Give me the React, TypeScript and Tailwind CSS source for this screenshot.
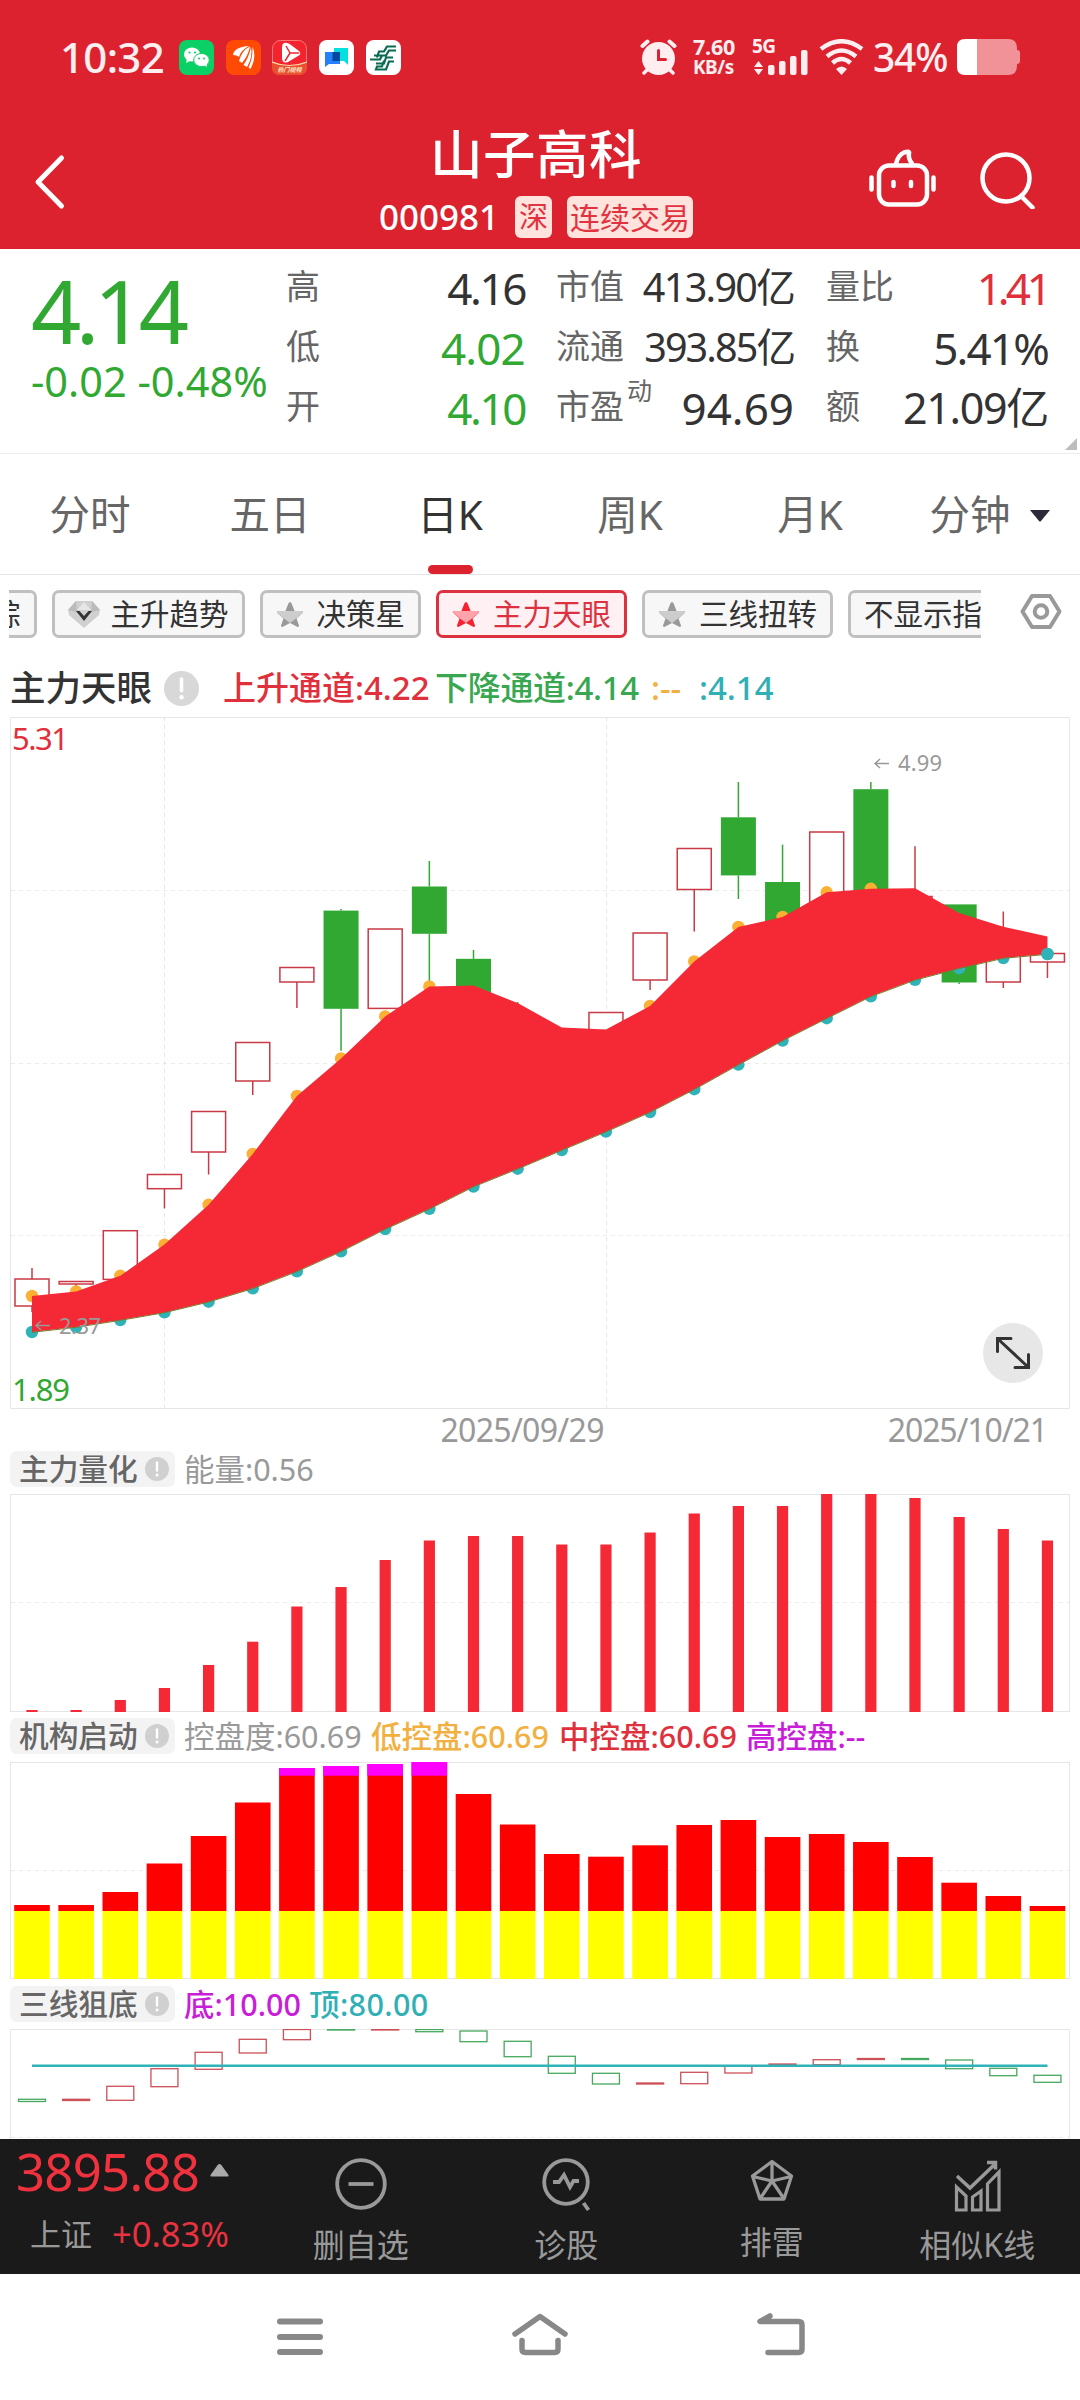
import React from 'react';

const RED = '#e0303c';
const GREEN = '#30a832';
const TEAL = '#2fb3b8';
const STEP = 44.15;

const cx = (i: number) => 32 + i * STEP;

interface Candle {
  up: boolean;
  top: number;
  bottom: number;
  high?: number;
  low?: number;
}

const candles: Candle[] = [
  { up: true, top: 1279, bottom: 1306, high: 1268, low: 1312 },
  { up: true, top: 1281.5, bottom: 1284, low: 1291 },
  { up: true, top: 1230.7, bottom: 1279.4 },
  { up: true, top: 1174.5, bottom: 1188.7, low: 1208.4 },
  { up: true, top: 1111.5, bottom: 1152, low: 1174.5 },
  { up: true, top: 1042.5, bottom: 1081, low: 1095 },
  { up: true, top: 967.5, bottom: 982, low: 1008 },
  { up: false, top: 910.6, bottom: 1008.8, high: 909, low: 1050.8 },
  { up: true, top: 929, bottom: 1008.4 },
  { up: false, top: 886.5, bottom: 933.8, high: 861, low: 984 },
  { up: false, top: 958.8, bottom: 1000, high: 950 },
  { up: false, top: 1015, bottom: 1040, high: 1002 },
  { up: true, top: 1035, bottom: 1060 },
  { up: true, top: 1012.5, bottom: 1040 },
  { up: true, top: 933, bottom: 980, low: 990 },
  { up: true, top: 848.5, bottom: 889.5, low: 931.5 },
  { up: false, top: 817.3, bottom: 875.4, high: 782, low: 899 },
  { up: false, top: 882, bottom: 930, high: 844.6 },
  { up: true, top: 832, bottom: 920 },
  { up: false, top: 789.2, bottom: 900, high: 782 },
  { up: true, top: 896.5, bottom: 950, high: 846.3 },
  { up: false, top: 904.4, bottom: 982.5, low: 984 },
  { up: true, top: 940, bottom: 982, high: 911.5, low: 988 },
  { up: true, top: 953.5, bottom: 962, low: 978 },
];

const upper = [
  1296, 1291.4, 1275.8, 1244.6, 1204.8, 1154, 1096, 1058.4, 1016.4, 986.5, 985.6, 1003,
  1027.6, 1029.4, 1006, 961.5, 927, 917, 892.3, 888.8, 888.3, 912.9, 926.7, 936.5,
];
const lower = [
  1332, 1327, 1320, 1312.4, 1301.7, 1288.3, 1271.3, 1251.3, 1229, 1208.8, 1186.5, 1168.7,
  1150, 1131.6, 1112, 1089.2, 1064.6, 1040.5, 1018.2, 996.3, 979.8, 968.2, 958, 954,
];
const upperDots = [0, 1, 2, 3, 4, 5, 6, 7, 8, 9, 14, 15, 16, 17, 18, 19];

const energy = [
  1710, 1710, 1700, 1688, 1665, 1641.7, 1606.5, 1587, 1560, 1540.5, 1536, 1536,
  1544.5, 1544.5, 1532.5, 1513.5, 1506, 1506, 1494, 1494, 1498, 1517, 1529, 1540.5,
];
const control = [
  1905, 1905, 1892, 1863.5, 1836, 1802.5, 1768, 1766, 1764, 1762, 1794, 1824.5,
  1854, 1856.7, 1845.3, 1825, 1820, 1837, 1834, 1842, 1857, 1882.7, 1896, 1906,
];

const bottomLine: [boolean, number, number][] = [
  [false, 2099.3, 2101.5], [true, 2099.3, 2100.5], [true, 2086.3, 2100.3], [true, 2068.7, 2086.7],
  [true, 2052.3, 2069.3], [true, 2039.3, 2053], [true, 2029.5, 2039.7], [false, 2029.5, 2030],
  [true, 2029.5, 2030], [false, 2029.5, 2031.7], [false, 2031, 2041.7], [false, 2041.3, 2056.7],
  [false, 2056.3, 2073.3], [false, 2073.3, 2084], [true, 2083, 2084], [true, 2072.3, 2083.7],
  [true, 2066, 2073], [true, 2064, 2065], [true, 2059.7, 2064.7], [true, 2058.5, 2059.5],
  [false, 2058.5, 2059.5], [false, 2060, 2068.7], [false, 2068.3, 2075.7], [false, 2075.3, 2082.3],
];

const StatusBar = () => (
  <div className="flex h-[114px] items-center pl-[60px] pr-[60px] text-[#ffeef0]">
    <span className="w-[119px] whitespace-nowrap text-[42px] font-medium leading-[50px] tracking-[-.7px]">10:32</span>
    <div className="flex gap-[11.7px]">
      <svg width="35" height="35" viewBox="0 0 35 35">
        <rect width="35" height="35" rx="8" fill="#0bd066" />
        <ellipse cx="13" cy="14.500" rx="8" ry="7" fill="#fff" />
        <path d="M8 19l-1 4 4-2z" fill="#fff" />
        <ellipse cx="22.500" cy="20" rx="7.800" ry="6.600" fill="#fff" stroke="#0bd066" strokeWidth="1" />
        <path d="M25 25l3 2-.5-4z" fill="#fff" />
        <circle cx="10.500" cy="12.500" r="1.100" fill="#0bd066" />
        <circle cx="16" cy="12.500" r="1.100" fill="#0bd066" />
        <circle cx="20" cy="18.500" r="1" fill="#0bd066" />
        <circle cx="25" cy="18.500" r="1" fill="#0bd066" />
      </svg>
      <svg width="35" height="35" viewBox="0 0 35 35">
        <rect width="35" height="35" rx="8" fill="#fe4a05" />
        <path d="M7 15Q8 7 23 6 15 10 13 17q-2-2-6-2z" fill="#fff" />
        <path d="M13 21Q16 10 24 6.500 22 16 16 23z" fill="#fff" />
        <path d="M17.500 25Q23 17 25 7q2 10-4 20z" fill="#fff" />
        <path d="M22.500 27.500Q27 18 26.500 6.500 31 17 24.500 29z" fill="#fff" />
      </svg>
      <svg width="35" height="35" viewBox="0 0 35 35">
        <rect x=".5" y=".5" width="34" height="34" rx="8" fill="#f4242f" stroke="#f77" />
        <path d="M0 22q17 7 35 0v5q0 8-8 8H8q-8 0-8-8z" fill="#e8502f" />
        <path d="M0 22q17 7 35 0" fill="none" stroke="#ffd9a8" strokeWidth="1.200" />
        <path d="M12 3q3-1 7 2l8 6q3 3-1 5l-10 6q-5 2-6-3V7q0-3 2-4z" fill="#fff" />
        <path d="M18 13l-4-7m4 7l9 0m-9 0l-5 8" stroke="#f4242f" strokeWidth="1.500" />
        <text x="17.500" y="32" fontSize="6" textAnchor="middle" fontStyle="italic" fontWeight="700" fill="#ffe9d0">热门视频</text>
      </svg>
      <svg width="35" height="35" viewBox="0 0 35 35">
        <rect width="35" height="35" rx="8" fill="#fff" />
        <path d="M15 8h14v17l-4-4H15z" fill="#04dfe0" />
        <path d="M6 12h15v12H10l-4 3z" fill="#2680fb" />
        <rect x="13.500" y="12" width="7.500" height="9" fill="#04479f" />
      </svg>
      <svg width="35" height="35" viewBox="0 0 35 35">
        <rect width="35" height="35" rx="8" fill="#fff" />
        <path
          d="M30 6.500H21l-3 5h-5l-2 6M30 10.500h-7l-3 5H8M4 19.500h10l2-4M27 17.500h-7l-2 6h-8M28 21.500h-5l-3 8H10l1-3h5l2-6"
          fill="none" stroke="#0b6b52" strokeWidth="2.200"
        />
      </svg>
    </div>

    <div className="ml-auto flex items-center">
      <svg width="37" height="36" viewBox="0 0 37 36" fill="none" stroke="#ffeef0" strokeLinecap="round">
        <circle cx="18.500" cy="19.500" r="16.500" fill="#ffeef0" stroke="none" />
        <path d="M2.500 7l5-4.500M34.500 7l-5-4.500" strokeWidth="4" />
        <path d="M7 31l-3 3M30 31l3 3" strokeWidth="3.500" />
        <path d="M18.500 11.500v9h7" stroke="#dc222f" strokeWidth="3" />
      </svg>
      <div className="ml-[16px] flex w-[60px] flex-col font-bold">
        <span className="text-[21.500px] leading-[20px] tracking-[-.2px]">7.60</span>
        <span className="whitespace-nowrap text-[19px] leading-[20px] tracking-[-.5px]">KB/s</span>
      </div>
      <svg className="mr-[10px] overflow-visible" width="56" height="36" viewBox="0 0 56 36" fill="#ffeef0">
        <text x="-1" y="14" fontSize="19" fontWeight="700" textLength="24">5G</text>
        <path d="M1 28l4.500-6 4.500 6zM1 30l4.500 6 4.500-6z" />
        <rect x="15" y="26" width="6.500" height="10" rx="2" />
        <rect x="26" y="22" width="6.500" height="14" rx="2" />
        <rect x="37" y="17" width="6.500" height="19" rx="2" />
        <rect x="48" y="11" width="6.500" height="25" rx="2" />
      </svg>
      <svg width="45" height="36" viewBox="0 0 45 36" fill="none" stroke="#ffeef0" strokeWidth="4.500">
        <path d="M2 10Q22.500-5.500 43 10" />
        <path d="M8 17.500q14.500-12 29 0" />
        <path d="M13.500 24q9-8 18 0" />
        <path d="M17 30q5.500-5 11 0l-5.500 6z" fill="#ffeef0" stroke="none" />
      </svg>
      <span className="ml-[9px] w-[84px] whitespace-nowrap text-[39px] font-medium leading-[50px] tracking-[-1.2px]">34%</span>
      <svg width="63" height="36" viewBox="0 0 63 36">
        <path d="M9 0h42q9 0 9 9v2q3 0 3 3v8q0 3-3 3v2q0 9-9 9H20V0z" fill="#f09298" />
        <path d="M20 0H8Q0 0 0 8v20q0 8 8 8h12z" fill="#fff" />
      </svg>
    </div>
  </div>
);

const Header = () => (
  <header className="h-[249px] bg-[#dc222f] text-white">
    <StatusBar />
    <div className="flex h-[135px] items-start justify-between pl-[33px] pr-[44px]">
      <svg className="mt-[40px]" width="34" height="56" viewBox="0 0 34 56" fill="none" stroke="#fff" strokeWidth="5" strokeLinecap="round" strokeLinejoin="round">
        <path d="M28.500 4L5 28l23.500 24" />
      </svg>
      <div className="ml-[136px] flex flex-col items-center">
        <h1 className="mt-[8px] text-[52.500px] font-medium leading-[64px] tracking-[.5px]">山子高科</h1>
        <div className="mt-[10px] flex h-[42px] items-center">
          <span className="mr-[16px] text-[35px] leading-[42px] font-medium">000981</span>
          <span className="mr-[15px] flex h-[42px] w-[37px] items-center justify-center rounded-[6px] bg-[#ffe3dc] text-[29px] text-[#e3323f]">深</span>
          <span className="flex h-[42px] w-[126px] items-center justify-center rounded-[6px] bg-[#ffe3dc] text-[30px] text-[#e3323f]">连续交易</span>
        </div>
      </div>
      <div className="mt-[34px] flex gap-[44px]">
        <svg width="67" height="61" viewBox="0 0 67 61" fill="none" stroke="#fff" strokeWidth="4.500" strokeLinecap="round">
          <rect x="10" y="17.500" width="48" height="39" rx="10" />
          <path d="M27 16q2-9 8-11.500 6-2 5 1-1 5 3 10" />
          <path d="M2.500 29.500v12M64.500 29.500v12M24.500 34v4M42 34v4" />
        </svg>
        <svg width="56" height="61" viewBox="0 0 56 61" fill="none" stroke="#fff" strokeWidth="4.500" strokeLinecap="round">
          <circle cx="26" cy="30" r="23.500" />
          <path d="M41 48l11.500 11.500" />
        </svg>
      </div>
    </div>
  </header>
);

interface QuoteCellProps {
  label: string;
  sup?: string;
  children: React.ReactNode;
}

const QuoteCell: React.FC<QuoteCellProps> = ({ label, sup, children }) => (
  <div className="flex h-[60px] items-center justify-between whitespace-nowrap">
    <span className="relative mt-[-3px] text-[34px] text-[#666]">
      {label}
      {sup && <span className="absolute left-[71px] top-[-9px] text-[25px]">{sup}</span>}
    </span>
    {children}
  </div>
);

const Quote = () => (
  <section className="relative flex h-[205px] border-b border-[#eee] pt-[9px] text-[#333]">
    <div className="w-[286px] whitespace-nowrap pl-[31px] text-[#30a832]">
      <div className="mt-[2px] text-[88px] leading-[100px] tracking-[-5.5px]">4.14</div>
      <div className="mt-[-2px] text-[41.500px] leading-[46px]">-0.02 -0.48%</div>
    </div>
    <div className="w-[239px]">
      <QuoteCell label="高"><span className="text-[44px] tracking-[-2.400px]">4.16</span></QuoteCell>
      <QuoteCell label="低"><span className="text-[44px] text-[#30a832] tracking-[-.8px]">4.02</span></QuoteCell>
      <QuoteCell label="开"><span className="text-[44px] text-[#30a832] tracking-[-2.400px]">4.10</span></QuoteCell>
    </div>
    <div className="ml-[31px] w-[238px]">
      <QuoteCell label="市值"><span className="text-[39.500px] tracking-[-1.700px]">413.90亿</span></QuoteCell>
      <QuoteCell label="流通"><span className="text-[39.500px] tracking-[-1.900px]">393.85亿</span></QuoteCell>
      <QuoteCell label="市盈" sup="动"><span className="text-[44px]">94.69</span></QuoteCell>
    </div>
    <div className="ml-[32px] w-[222px]">
      <QuoteCell label="量比"><span className="text-[44px] tracking-[-4px] text-[#e0303c]">1.41</span></QuoteCell>
      <QuoteCell label="换"><span className="text-[44px] tracking-[-1.800px]">5.41%</span></QuoteCell>
      <QuoteCell label="额"><span className="text-[43px] tracking-[-1.300px]">21.09亿</span></QuoteCell>
    </div>
    <svg className="absolute bottom-[3px] right-[3px]" width="12" height="12" viewBox="0 0 12 12">
      <path d="M12 0v12H0z" fill="#bdbdbd" />
    </svg>
  </section>
);

const tabs = ['分时', '五日', '日K', '周K', '月K', '分钟'];

const PeriodTabs = () => (
  <nav className="grid h-[121px] grid-cols-6 border-b border-[#e4e4e4] text-[40.500px] text-[#666]">
    {tabs.map((tab) => (
      <div key={tab} className="flex flex-col items-center">
        <div className={tab === '日K' ? 'flex h-[111px] items-center pt-[12px] text-[#333]' : 'flex h-[111px] items-center pt-[12px]'}>
          {tab}
          {tab === '分钟' && (
            <svg className="ml-[18px]" width="22" height="12" viewBox="0 0 22 12">
              <path d="M1 0h20l-9 11q-1 1-2 0z" fill="#2b2b38" />
            </svg>
          )}
        </div>
        {tab === '日K' && <div className="h-[9px] w-[45px] rounded-full bg-[#dc222f]" />}
      </div>
    ))}
  </nav>
);

const Star = ({ active = false }) => (
  <svg className="mr-[13px]" width="28" height="27" viewBox="0 0 28 27">
    <path
      d="M14 1q1 0 1.600 1.500l3 7.500h7.400q1.500.5.500 2l-6 5.500 2.500 7q0 2-1.800 1.300L14 22l-7.200 3.800Q5 26.500 5 24.500l2.500-7-6-5.500q-1-1.500.5-2h7.400l3-7.500Q13 1 14 1z"
      fill={active ? '#f5222f' : '#999'}
    />
    <path d="M1.500 12q-1-1.500.5-2h24q1.500.5.500 2L20 17.500 14 22l-6-4.500z" fill={active ? '#ffa3ab' : '#cdcdcd'} />
  </svg>
);

const Diamond = () => (
  <svg className="mr-[11px]" width="32" height="27" viewBox="0 0 32 27">
    <path d="M8 0h16l8 9-1 5-15 13L1 14l-1-5z" fill="#d0d0d0" />
    <path d="M8 0l-8 9 9 2zM24 0l8 9-9 2z" fill="#bbb" />
    <path d="M16 1l7 8H9z" fill="#e6e6e6" />
    <path d="M8 10l8 10 8-10-3.500 0-4.500 5-4.500-5z" fill="#333" />
  </svg>
);

const Chip: React.FC<{ icon?: React.ReactNode; active?: boolean; children: React.ReactNode }> = ({ icon, active, children }) => (
  <div
    className={
      active
        ? 'flex h-[48px] shrink-0 items-center rounded-[7px] border-3 border-[#dc323f] bg-[#fff1f3] px-[13px] text-[#dc323f]'
        : 'flex h-[48px] shrink-0 items-center rounded-[7px] border-3 border-[#c0c0c0] bg-[#f7f7f7] px-[13px] text-[#333]'
    }
  >
    {icon}
    <span className="text-[29.500px]">{children}</span>
  </div>
);

const Chips = () => (
  <div className="flex h-[84px] items-start pl-[9px] pt-[15px]">
    <div className="flex w-[972px] gap-[15px] overflow-hidden whitespace-nowrap">
      <div className="ml-[-122.500px] flex">
        <Chip>主力追踪</Chip>
      </div>
      <Chip icon={<Diamond />}>主升趋势</Chip>
      <Chip icon={<Star />}>决策星</Chip>
      <Chip icon={<Star active />} active>主力天眼</Chip>
      <Chip icon={<Star />}>三线扭转</Chip>
      <Chip>不显示指标</Chip>
    </div>
    <svg className="ml-[39px] mt-[3px]" width="42" height="38" viewBox="0 0 42 38" fill="none" stroke="#999" strokeWidth="4" strokeLinejoin="round">
      <path d="M12 3h18l9.500 15.500L30 34H12L2.500 18.500z" />
      <circle cx="21" cy="18.500" r="6.300" />
    </svg>
  </div>
);

const Info = ({ size = 24, color = '#d0d0d0' }) => (
  <svg width={size} height={size} viewBox="0 0 24 24">
    <circle cx="12" cy="12" r="12" fill={color} />
    <path d="M12 5.500v8" stroke="#fff" strokeWidth="2.400" strokeLinecap="round" />
    <circle cx="12" cy="18" r="1.500" fill="#fff" />
  </svg>
);

const Frame = ({ y, h, lines }: { y: number; h: number; lines: number[] }) => (
  <g fill="none" stroke="#e6e6e6">
    <rect x="10.500" y={y + 0.5} width="1059" height={h} />
    {lines.map((l) => (
      <path key={l} d={`M11 ${l}H1069`} strokeDasharray="4 4" stroke="#ebebeb" />
    ))}
  </g>
);

const MainChart = () => {
  const area = [
    ...upper.map((y, i) => `${cx(i)},${y}`),
    ...lower.map((y, i) => `${cx(i)},${y}`).reverse(),
  ].join(' ');

  return (
    <svg className="block" width="1080" height="692" viewBox="0 717 1080 692">
      <Frame y={717} h={691} lines={[890.5, 1063.5, 1235.5]} />
      <path d="M164.500 717V1408M606.500 717V1408" stroke="#e6e6e6" strokeDasharray="4 4" />
      {candles.map((c, i) => {
        const color = c.up ? '#c93a46' : GREEN;
        return (
          <g key={i} stroke={color} strokeWidth="1.500">
            {c.high && <path d={`M${cx(i)} ${c.high}V${c.top}`} />}
            {c.low && <path d={`M${cx(i)} ${c.bottom}V${c.low}`} />}
            {c.up ? (
              <rect x={cx(i) - 17} y={c.top} width="34" height={c.bottom - c.top} fill="#fff" />
            ) : (
              <rect x={cx(i) - 17.5} y={c.top} width="35" height={c.bottom - c.top} fill={color} stroke="none" />
            )}
          </g>
        );
      })}
      {upperDots.map((i) => (
        <circle key={i} cx={cx(i)} cy={upper[i]} r="6.200" fill="#fbb034" />
      ))}
      {lower.map((y, i) => (
        <circle key={i} cx={cx(i)} cy={y} r="6.200" fill={TEAL} />
      ))}
      <polygon points={area} fill="#f52936" />
      <polyline points={lower.map((y, i) => `${cx(i)},${y + 0.3}`).join(' ')} fill="none" stroke="#7a7a2c" strokeWidth="1" />
      <circle cx={cx(23)} cy="954" r="6.200" fill={TEAL} />

      <text x="12" y="749.500" fontSize="31" fill={RED} textLength="57">5.31</text>
      <text x="12" y="1400.500" fontSize="31" fill={GREEN} textLength="58">1.89</text>
      <g fill="none" stroke="#999" strokeWidth="1.500">
        <path d="M36 1325.500h14M41 1321l-5 4.500 5 4.500" />
        <path d="M875 763.500h14M880 759l-5 4.500 5 4.500" />
      </g>
      <text x="59" y="1333.500" fontSize="22" fill="#999" textLength="42">2.37</text>
      <text x="898" y="771" fontSize="22" fill="#999" textLength="44">4.99</text>

      <circle cx="1013" cy="1353" r="30" fill="#e7e7e7" />
      <path d="M1011 1338.500h-13.500v13M1015 1367.500h13.500v-13M998 1339l30 28" fill="none" stroke="#333" strokeWidth="3" strokeLinecap="round" />
    </svg>
  );
};

const SubHeader: React.FC<{ title: string; children: React.ReactNode }> = ({ title, children }) => (
  <div className="flex h-[36px] items-center whitespace-nowrap pl-[10px] text-[30.500px] leading-[36px]">
    <div className="mr-[9px] flex h-[36px] w-[165px] items-center justify-between rounded-[7px] bg-[#f3f3f3] pl-[9px] pr-[6px] text-[29.700px] font-medium text-[#666]">
      {title}
      <Info />
    </div>
    {children}
  </div>
);

const EnergyChart = () => (
  <svg className="mt-[7px] block" width="1080" height="218" viewBox="0 1494 1080 218">
    <Frame y={1494} h={217} lines={[1602.5]} />
    {energy.map((y, i) => (
      <rect key={i} x={cx(i) - 5.6} y={y} width="11.200" height={1712 - y} fill="#f52936" />
    ))}
  </svg>
);

const ControlChart = () => (
  <svg className="mt-[8px] block" width="1080" height="218" viewBox="0 1762 1080 218">
    <Frame y={1762} h={216} lines={[1870.5]} />
    {control.map((y, i) => (
      <g key={i}>
        <rect x={cx(i) - 17.8} y={y} width="35.600" height={1911 - y} fill="#f00" />
        {y < 1775 && <rect x={cx(i) - 17.8} y={y} width="35.600" height={1775.7 - y} fill="#f0f" />}
        <rect x={cx(i) - 17.8} y="1911" width="35.600" height="68" fill="#ff0" />
      </g>
    ))}
  </svg>
);

const BottomChart = () => (
  <svg className="mt-[7px] block" width="1080" height="110" viewBox="0 2029 1080 110">
    <Frame y={2029} h={216} lines={[2137.5]} />
    {bottomLine.map(([up, top, bottom], i) => (
      <rect key={i} x={cx(i) - 13.5} y={top} width="27" height={bottom - top} fill="#fff" stroke={up ? '#cc5058' : '#46a85e'} strokeWidth="1.300" />
    ))}
    <path d="M32 2065.700H1047.500" stroke={TEAL} strokeWidth="2.400" />
  </svg>
);

const actionIcons: Record<string, React.ReactNode> = {
  删自选: (
    <>
      <circle cx="26" cy="28" r="23.800" />
      <path d="M13.500 28h25" />
    </>
  ),
  诊股: (
    <>
      <circle cx="26" cy="26" r="21.800" />
      <path d="M13 26h6l5-7 6 12 3.500-6h5.500M43.500 47l5 7" />
    </>
  ),
  排雷: (
    <>
      <path d="M26 5.500L45.500 20l-7.500 23h-24L6.500 20zM26 6v18M26 25l19-4.500M26 25L7 20.500M26 25L14.500 42M26 25l11.500 17" strokeWidth="3.300" strokeLinejoin="round" />
    </>
  ),
  相似K线: (
    <>
      <path d="M5.500 54V31l9.500 9v14zM21.500 54V41l8.500-6v19zM36.500 54V28l11.500-12v38z" strokeWidth="3.200" />
      <path d="M6 20l13 12 24-23M36 6.500h8.500v7" strokeWidth="3.500" />
    </>
  ),
};

const ActionBar = () => (
  <div className="flex h-[135px] bg-[#1a1a1a] text-[#999]">
    <div className="w-[258px] whitespace-nowrap pl-[16px]">
      <div className="flex items-center">
        <span className="mt-[2px] text-[51px] leading-[60px] tracking-[-.8px] text-[#f0323f]">3895.88</span>
        <svg className="ml-[11px]" width="19" height="13" viewBox="0 0 19 13">
          <path d="M9.500 0q1 0 2 1.200L18.500 11q.5 1.500-1 1.500h-16Q0 12.500.5 11L7.500 1.200Q8.500 0 9.500 0z" fill="#aaa" />
        </svg>
      </div>
      <div className="mt-[11px] flex items-center pl-[14px] text-[31px] leading-[44px]">
        上证
        <span className="ml-[20px] text-[34.500px] text-[#e8323f]">+0.83%</span>
      </div>
    </div>
    {Object.keys(actionIcons).map((name) => (
      <div key={name} className="flex w-[205.500px] flex-col items-center">
        <svg className="mt-[17px]" width="52" height="58" viewBox="0 0 52 58" fill="none" stroke="#999" strokeWidth="3.800">
          {actionIcons[name]}
        </svg>
        <span className={name === '排雷' ? 'mt-[6px] text-[32px] leading-[44px]' : 'mt-[9px] text-[32px] leading-[44px]'}>{name}</span>
      </div>
    ))}
  </div>
);

const SystemNav = () => (
  <div className="flex h-[126px] items-start justify-center gap-[184px] bg-white pt-[38px]">
    <svg width="54" height="45" viewBox="0 0 54 45" fill="none" stroke="#888" strokeWidth="6" strokeLinecap="round">
      <path d="M7 9.500h40M7 25h40M7 40h40" />
    </svg>
    <svg width="58" height="45" viewBox="0 0 58 45" fill="none" stroke="#888" strokeWidth="5.500" strokeLinecap="round" strokeLinejoin="round">
      <path d="M4 22L29 4.500 54 22" />
      <path d="M11 28.500V37q0 3.500 3.500 3.500h29Q47 40.500 47 37v-8.500" />
    </svg>
    <svg width="54" height="45" viewBox="0 0 54 45" fill="none" stroke="#888" strokeWidth="5.500" strokeLinecap="round" strokeLinejoin="round">
      <path d="M17 4L7 9.500h38.500q3.500 0 3.500 3.500v24q0 3.500-3.500 3.500H15" />
      <path d="M17 3.500V9H6z" fill="#888" strokeWidth="2" />
    </svg>
  </div>
);

const App = () => {
  return (
    <div className="h-[2400px] w-[1080px] overflow-hidden bg-white font-['Noto_Sans','Noto_Sans_CJK_SC',sans-serif]">
      <Header />
      <Quote />
      <PeriodTabs />
      <Chips />
      <div className="flex h-[58px] items-center whitespace-nowrap pl-[10px] text-[33px] font-medium">
        <span className="w-[154px] text-[35.500px] text-[#333]">主力天眼</span>
        <Info size={35} color="#d8d8d8" />
        <span className="ml-[24px] w-[212px] text-[#e0303c]">上升通道:4.22</span>
        <span className="w-[216px] tracking-[-.3px] text-[#38a750]">下降通道:4.14</span>
        <span className="w-[48px] text-[#f2b040]">:--</span>
        <span className="text-[#30b0b5]">:4.14</span>
      </div>
      <MainChart />
      <div className="flex h-[42px] items-center justify-end pr-[33px] text-[32px] text-[#999]">
        <span className="mr-[284px] tracking-[-.7px]">2025/09/29</span>
        <span className="tracking-[-1.1px]">2025/10/21</span>
      </div>
      <SubHeader title="主力量化">
        <span className="text-[#999]">能量:0.56</span>
      </SubHeader>
      <EnergyChart />
      <div className="h-[6px]" />
      <SubHeader title="机构启动">
        <span className="w-[187px] text-[#999]">控盘度:60.69</span>
        <span className="w-[188px] font-medium text-[#f2b040]">低控盘:60.69</span>
        <span className="w-[187px] font-medium text-[#e0303c]">中控盘:60.69</span>
        <span className="font-medium text-[#c81ed8]">高控盘:--</span>
      </SubHeader>
      <ControlChart />
      <div className="h-[6px]" />
      <SubHeader title="三线狙底">
        <span className="w-[125px] font-medium text-[#c81ed8]">底:10.00</span>
        <span className="font-medium tracking-[.4px] text-[#30b0b5]">顶:80.00</span>
      </SubHeader>
      <BottomChart />
      <ActionBar />
      <SystemNav />
    </div>
  );
};

export default App;
